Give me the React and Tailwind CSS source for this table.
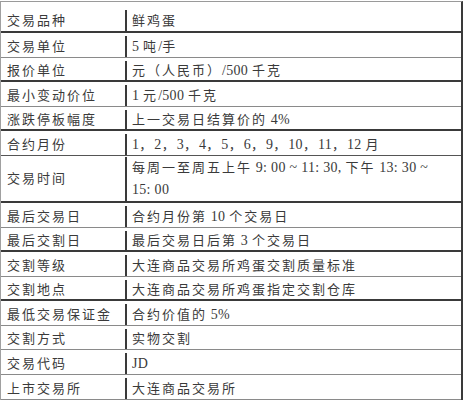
import React from "react";

const rows = [
  { k: "交易品种", v: ["鲜鸡蛋"], h: "h-[31px] pt-[8px]", b: "border-b-2 border-b-[#3a3a3a]" },
  { k: "交易单位", v: ["5 吨/手"], h: "h-[25px] pt-[3px]", b: "border-b border-b-[#8a8a8a]" },
  { k: "报价单位", v: ["元（人民币）/500 千克"], h: "h-[24px] pt-[3px]", b: "border-b-2 border-b-[#3a3a3a]" },
  { k: "最小变动价位", v: ["1 元/500 千克"], h: "h-[25px] pt-[3px]", b: "border-b border-b-[#8a8a8a]" },
  { k: "涨跌停板幅度", v: ["上一交易日结算价的 4%"], h: "h-[24px] pt-[3px]", b: "border-b-2 border-b-[#3a3a3a]" },
  { k: "合约月份", v: ["1，2，3，4，5，6，9，10，11，12 月"], h: "h-[25px] pt-[3px]", b: "border-b border-b-[#555]" },
  {
    k: "交易时间",
    v: ["每周一至周五上午 9: 00 ~ 11: 30, 下午 13: 30 ~", "15: 00"],
    h: "h-[47px] pt-[1px]",
    b: "border-b-2 border-b-[#3a3a3a]",
  },
  { k: "最后交易日", v: ["合约月份第 10 个交易日"], h: "h-[25px] pt-[3px]", b: "border-b border-b-[#8a8a8a]" },
  { k: "最后交割日", v: ["最后交易日后第 3 个交易日"], h: "h-[24px] pt-[3px]", b: "border-b-2 border-b-[#3a3a3a]" },
  { k: "交割等级", v: ["大连商品交易所鸡蛋交割质量标准"], h: "h-[25px] pt-[3px]", b: "border-b border-b-[#8a8a8a]" },
  { k: "交割地点", v: ["大连商品交易所鸡蛋指定交割仓库"], h: "h-[24px] pt-[3px]", b: "border-b-2 border-b-[#3a3a3a]" },
  { k: "最低交易保证金", v: ["合约价值的 5%"], h: "h-[25px] pt-[3px]", b: "border-b border-b-[#8a8a8a]" },
  { k: "交割方式", v: ["实物交割"], h: "h-[24px] pt-[3px]", b: "border-b border-b-[#8a8a8a]" },
  { k: "交易代码", v: ["JD"], h: "h-[25px] pt-[3px]", b: "border-b border-b-[#8a8a8a]" },
  { k: "上市交易所", v: ["大连商品交易所"], h: "h-[25px] pt-[3px]", b: "border-b border-b-[#8a8a8a]" },
];

function Mixed({ text }) {
  const parts = text.split(/([\x20-\x7E]+)/).filter((p) => p !== "");
  return (
    <>
      {parts.map((p, i) =>
        /^[\x20-\x7E]+$/.test(p) ? (
          <span key={i} className="tracking-[0.3px] text-[14px]">
            {p}
          </span>
        ) : (
          <span key={i}>{p}</span>
        )
      )}
    </>
  );
}

export default function App() {
  return (
    <div
      className="w-[464px] h-[400px] bg-white overflow-hidden text-[13px] tracking-[2px] text-[#3a3a3a]"
      style={{ fontFamily: '"Liberation Serif", "Noto Sans CJK SC", serif' }}
    >
      <div className="mt-[1px] w-[463px] border-t border-t-[#9a9a9a] border-l border-l-[#a0a0a0] border-r-2 border-r-[#3a3a3a]">
        {rows.map((r) => (
          <div key={r.k} className={`flex ${r.h} ${r.b}`}>
            <div className="w-[126px] shrink-0 flex items-center pl-[6px] border-r-2 border-r-[#3a3a3a] whitespace-nowrap">
              {r.k}
            </div>
            <div className="flex-1 flex flex-col justify-center pl-[5px] whitespace-nowrap leading-[22px]">
              {r.v.map((line) => (
                <div key={line}>
                  <Mixed text={line} />
                </div>
              ))}
            </div>
          </div>
        ))}
      </div>
    </div>
  );
}
